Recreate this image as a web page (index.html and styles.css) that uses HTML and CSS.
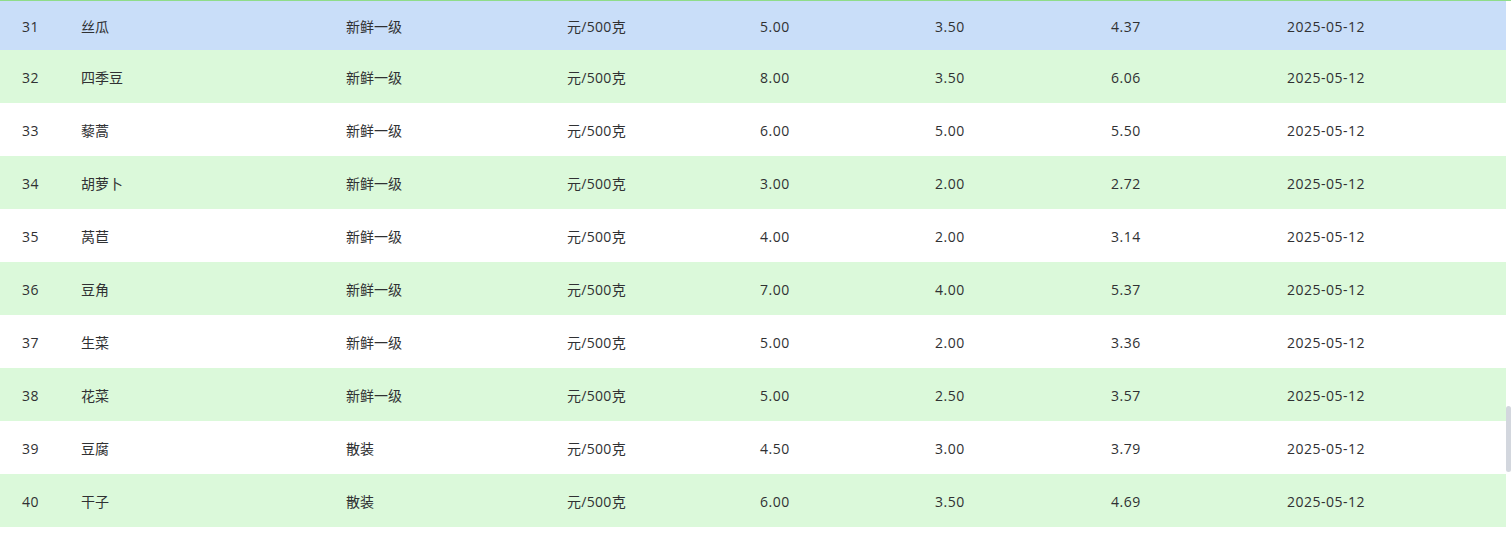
FILE: index.html
```html
<!DOCTYPE html>
<html lang="zh">
<head>
<meta charset="utf-8">
<link rel="stylesheet" href="styles.css">
</head>
<body>
<div class="page">
  <div class="table">
    <div class="row current first"><div class="c n">31</div><div class="c">丝瓜</div><div class="c">新鲜一级</div><div class="c u">元/500克</div><div class="c n">5.00</div><div class="c n">3.50</div><div class="c n">4.37</div><div class="c n">2025-05-12</div></div>
    <div class="row odd"><div class="c n">32</div><div class="c">四季豆</div><div class="c">新鲜一级</div><div class="c u">元/500克</div><div class="c n">8.00</div><div class="c n">3.50</div><div class="c n">6.06</div><div class="c n">2025-05-12</div></div>
    <div class="row"><div class="c n">33</div><div class="c">藜蒿</div><div class="c">新鲜一级</div><div class="c u">元/500克</div><div class="c n">6.00</div><div class="c n">5.00</div><div class="c n">5.50</div><div class="c n">2025-05-12</div></div>
    <div class="row odd"><div class="c n">34</div><div class="c">胡萝卜</div><div class="c">新鲜一级</div><div class="c u">元/500克</div><div class="c n">3.00</div><div class="c n">2.00</div><div class="c n">2.72</div><div class="c n">2025-05-12</div></div>
    <div class="row"><div class="c n">35</div><div class="c">莴苣</div><div class="c">新鲜一级</div><div class="c u">元/500克</div><div class="c n">4.00</div><div class="c n">2.00</div><div class="c n">3.14</div><div class="c n">2025-05-12</div></div>
    <div class="row odd"><div class="c n">36</div><div class="c">豆角</div><div class="c">新鲜一级</div><div class="c u">元/500克</div><div class="c n">7.00</div><div class="c n">4.00</div><div class="c n">5.37</div><div class="c n">2025-05-12</div></div>
    <div class="row"><div class="c n">37</div><div class="c">生菜</div><div class="c">新鲜一级</div><div class="c u">元/500克</div><div class="c n">5.00</div><div class="c n">2.00</div><div class="c n">3.36</div><div class="c n">2025-05-12</div></div>
    <div class="row odd"><div class="c n">38</div><div class="c">花菜</div><div class="c">新鲜一级</div><div class="c u">元/500克</div><div class="c n">5.00</div><div class="c n">2.50</div><div class="c n">3.57</div><div class="c n">2025-05-12</div></div>
    <div class="row"><div class="c n">39</div><div class="c">豆腐</div><div class="c">散装</div><div class="c u">元/500克</div><div class="c n">4.50</div><div class="c n">3.00</div><div class="c n">3.79</div><div class="c n">2025-05-12</div></div>
    <div class="row odd"><div class="c n">40</div><div class="c">干子</div><div class="c">散装</div><div class="c u">元/500克</div><div class="c n">6.00</div><div class="c n">3.50</div><div class="c n">4.69</div><div class="c n">2025-05-12</div></div>
  </div>
  <div class="scrollbar"><div class="thumb"></div></div>
</div>
</body>
</html>
```

FILE: styles.css
```css
html, body {
  margin: 0;
  padding: 0;
  background: #ffffff;
}
body {
  font-family: "Open Sans", "Noto Sans CJK SC", sans-serif;
  font-size: 14px;
  color: #303133;
  overflow: hidden;
}
.page {
  position: relative;
  width: 1511px;
  height: 534px;
  border-top: 1px solid #8fdc8a;
  box-sizing: border-box;
}
.table {
  width: 1506px;
}
.row {
  display: grid;
  grid-template-columns: 59px 265px 221px 193px 175px 176px 176px 231px;
  padding-left: 10px;
  padding-top: 1px;
  box-sizing: border-box;
  height: 53px;
  align-items: center;
  background: #ffffff;
}
.row.first {
  height: 49px;
}
.row.current {
  background: #c9def9;
}
.row.odd {
  background: #dbf9da;
}
.c {
  padding-left: 12px;
  white-space: nowrap;
}
.c.n {
  letter-spacing: 0.5px;
}
.c.u {
  letter-spacing: 0.3px;
}
.scrollbar {
  position: absolute;
  right: 0;
  top: 0;
  width: 5px;
  height: 100%;
}
.thumb {
  position: absolute;
  top: 405px;
  left: 0;
  width: 5px;
  height: 66px;
  border-radius: 3px;
  background: #d3d7de;
}
```
